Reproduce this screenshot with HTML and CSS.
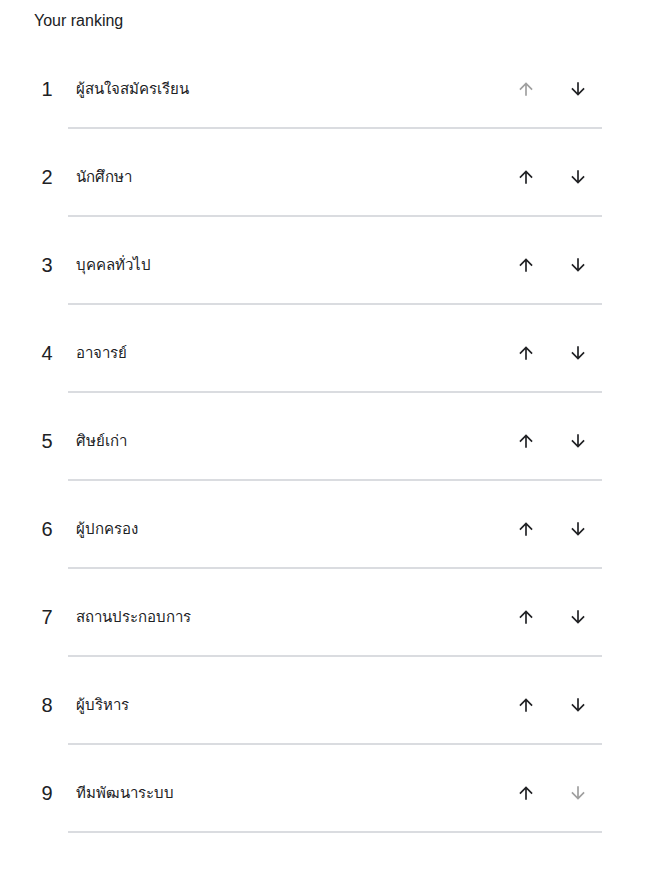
FILE: index.html
```html
<!DOCTYPE html>
<html lang="th">
<head>
<meta charset="utf-8">
<title>Your ranking</title>
<link rel="stylesheet" href="styles.css">
</head>
<body>
<div class="ranking">
  <div class="title">Your ranking</div>
  <ol class="list">
    <li class="row"><span class="num">1</span><div class="main"><span class="label">ผู้สนใจสมัครเรียน</span><button class="btn off"><svg viewBox="0 0 24 24"><path d="M4 12l1.41 1.41L11 7.830V20h2V7.83l5.58 5.59L20 12l-8-8-8 8z"/></svg></button><button class="btn"><svg viewBox="0 0 24 24"><path d="M20 12l-1.41-1.41L13 16.17V4h-2v12.17l-5.58-5.59L4 12l8 8 8-8z"/></svg></button></div></li>
    <li class="row"><span class="num">2</span><div class="main"><span class="label">นักศึกษา</span><button class="btn"><svg viewBox="0 0 24 24"><path d="M4 12l1.41 1.41L11 7.83V20h2V7.83l5.58 5.59L20 12l-8-8-8 8z"/></svg></button><button class="btn"><svg viewBox="0 0 24 24"><path d="M20 12l-1.41-1.41L13 16.17V4h-2v12.17l-5.58-5.59L4 12l8 8 8-8z"/></svg></button></div></li>
    <li class="row"><span class="num">3</span><div class="main"><span class="label">บุคคลทั่วไป</span><button class="btn"><svg viewBox="0 0 24 24"><path d="M4 12l1.41 1.41L11 7.83V20h2V7.83l5.58 5.59L20 12l-8-8-8 8z"/></svg></button><button class="btn"><svg viewBox="0 0 24 24"><path d="M20 12l-1.41-1.41L13 16.17V4h-2v12.17l-5.58-5.59L4 12l8 8 8-8z"/></svg></button></div></li>
    <li class="row"><span class="num">4</span><div class="main"><span class="label">อาจารย์</span><button class="btn"><svg viewBox="0 0 24 24"><path d="M4 12l1.41 1.41L11 7.83V20h2V7.83l5.58 5.59L20 12l-8-8-8 8z"/></svg></button><button class="btn"><svg viewBox="0 0 24 24"><path d="M20 12l-1.41-1.41L13 16.17V4h-2v12.17l-5.58-5.59L4 12l8 8 8-8z"/></svg></button></div></li>
    <li class="row"><span class="num">5</span><div class="main"><span class="label">ศิษย์เก่า</span><button class="btn"><svg viewBox="0 0 24 24"><path d="M4 12l1.41 1.41L11 7.83V20h2V7.83l5.58 5.59L20 12l-8-8-8 8z"/></svg></button><button class="btn"><svg viewBox="0 0 24 24"><path d="M20 12l-1.41-1.41L13 16.17V4h-2v12.17l-5.58-5.59L4 12l8 8 8-8z"/></svg></button></div></li>
    <li class="row"><span class="num">6</span><div class="main"><span class="label">ผู้ปกครอง</span><button class="btn"><svg viewBox="0 0 24 24"><path d="M4 12l1.41 1.41L11 7.83V20h2V7.83l5.58 5.59L20 12l-8-8-8 8z"/></svg></button><button class="btn"><svg viewBox="0 0 24 24"><path d="M20 12l-1.41-1.41L13 16.17V4h-2v12.17l-5.58-5.59L4 12l8 8 8-8z"/></svg></button></div></li>
    <li class="row"><span class="num">7</span><div class="main"><span class="label">สถานประกอบการ</span><button class="btn"><svg viewBox="0 0 24 24"><path d="M4 12l1.41 1.41L11 7.83V20h2V7.83l5.58 5.59L20 12l-8-8-8 8z"/></svg></button><button class="btn"><svg viewBox="0 0 24 24"><path d="M20 12l-1.41-1.41L13 16.17V4h-2v12.17l-5.58-5.59L4 12l8 8 8-8z"/></svg></button></div></li>
    <li class="row"><span class="num">8</span><div class="main"><span class="label">ผู้บริหาร</span><button class="btn"><svg viewBox="0 0 24 24"><path d="M4 12l1.41 1.41L11 7.83V20h2V7.83l5.58 5.59L20 12l-8-8-8 8z"/></svg></button><button class="btn"><svg viewBox="0 0 24 24"><path d="M20 12l-1.41-1.41L13 16.17V4h-2v12.17l-5.58-5.59L4 12l8 8 8-8z"/></svg></button></div></li>
    <li class="row"><span class="num">9</span><div class="main"><span class="label">ทีมพัฒนาระบบ</span><button class="btn"><svg viewBox="0 0 24 24"><path d="M4 12l1.41 1.41L11 7.83V20h2V7.83l5.58 5.59L20 12l-8-8-8 8z"/></svg></button><button class="btn off"><svg viewBox="0 0 24 24"><path d="M20 12l-1.41-1.41L13 16.17V4h-2v12.17l-5.58-5.59L4 12l8 8 8-8z"/></svg></button></div></li>
  </ol>
</div>
</body>
</html>
```

FILE: styles.css
```css
html, body {
  margin: 0;
  padding: 0;
  background: #ffffff;
}
body {
  font-family: "Liberation Sans", Arial, "DejaVu Sans", sans-serif;
  color: #202124;
}
.ranking {
  width: 568px;
  padding-left: 34px;
  padding-top: 11px;
}
.title {
  font-size: 16px;
  line-height: 20px;
  height: 20px;
  margin-bottom: 10px;
}
.list {
  list-style: none;
  margin: 0;
  padding: 0;
}
.row {
  display: flex;
  align-items: stretch;
}
.num {
  width: 26px;
  margin-right: 8px;
  padding-top: 24px;
  height: 48px;
  line-height: 48px;
  font-size: 20px;
  text-align: center;
}
.main {
  flex: 1;
  display: flex;
  align-items: center;
  height: 48px;
  padding: 24px 0 14px;
  border-bottom: 2px solid #dadce0;
}
.label {
  flex: 1;
  padding-left: 8px;
  font-size: 15px;
  margin-top: -1px;
}
.btn {
  width: 48px;
  height: 48px;
  margin-left: 4px;
  padding: 0;
  border: 0;
  background: transparent;
  display: flex;
  align-items: center;
  justify-content: center;
  fill: #202124;
}
.btn svg {
  width: 20px;
  height: 20px;
}
.btn.off {
  fill: rgba(0, 0, 0, 0.38);
}
```
